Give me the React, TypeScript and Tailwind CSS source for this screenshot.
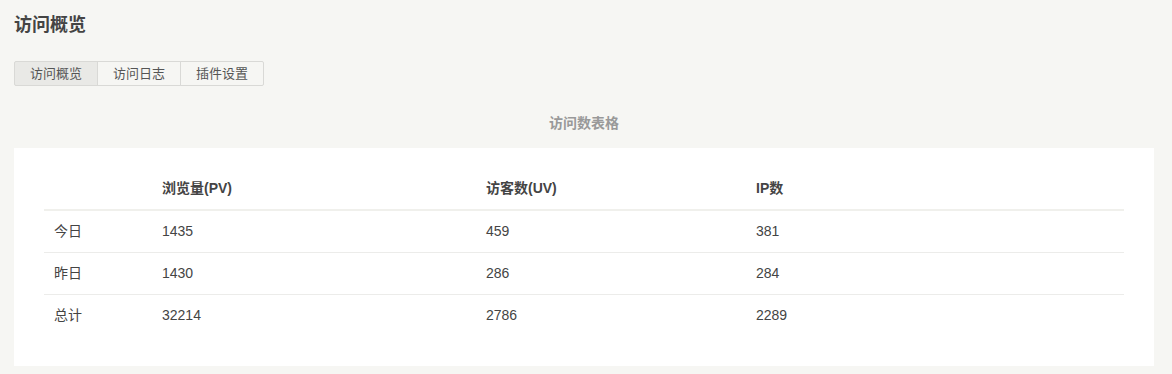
const rows = [
  { label: '今日', pv: 1435, uv: 459, ip: 381 },
  { label: '昨日', pv: 1430, uv: 286, ip: 284 },
  { label: '总计', pv: 32214, uv: 2786, ip: 2289 },
]

const tabs = ['访问概览', '访问日志', '插件设置']

export default function App() {
  return (
    <div
      className="min-h-[374px] bg-[#f6f6f3] text-[#444] pl-[14px] pt-[13px]"
      style={{ fontFamily: '"Liberation Sans", Arial, "Noto Sans CJK SC", sans-serif' }}
    >
      <h2 className="text-[18px] leading-[24px] font-bold">访问概览</h2>

      {/* tabs */}
      <ul className="mt-[24px] flex">
        {tabs.map((t, i) => (
          <li
            key={t}
            className={`w-[84px] h-[25px] border border-[#d9d9d6] text-center text-[13px] leading-[23px] text-[#555] ${
              i > 0 ? '-ml-px' : ''
            } ${i === 0 ? 'bg-[#e9e9e6] rounded-l-[2px]' : 'bg-[#f6f6f3]'} ${i === 2 ? 'rounded-r-[2px]' : ''}`}
          >
            {t}
          </li>
        ))}
      </ul>

      <div className="w-[1140px]">
        <h3 className="mt-[27px] text-center text-[14px] leading-[20px] font-bold text-[#999]">访问数表格</h3>

        <div className="mt-[15px] bg-white px-[30px] pt-[20px] pb-[30px]">
          <table className="w-full table-fixed border-separate border-spacing-0 text-[14px]">
            <colgroup>
              <col className="w-[108px]" />
              <col className="w-[324px]" />
              <col className="w-[270px]" />
              <col />
            </colgroup>
            <thead>
              <tr>
                {['', '浏览量(PV)', '访客数(UV)', 'IP数'].map((h, i) => (
                  <th key={i} className="px-[10px] py-[10px] leading-[21px] text-left font-bold border-b-2 border-[#f0f0ec]">
                    {h}
                  </th>
                ))}
              </tr>
            </thead>
            <tbody>
              {rows.map((r, i) => {
                const b = i < rows.length - 1 ? 'border-b border-[#ececea]' : ''
                return (
                  <tr key={r.label}>
                    <td className={`px-[10px] py-[10px] leading-[21px] ${b}`}>{r.label}</td>
                    <td className={`px-[10px] py-[10px] leading-[21px] ${b}`}>{r.pv}</td>
                    <td className={`px-[10px] py-[10px] leading-[21px] ${b}`}>{r.uv}</td>
                    <td className={`px-[10px] py-[10px] leading-[21px] ${b}`}>{r.ip}</td>
                  </tr>
                )
              })}
            </tbody>
          </table>
        </div>
      </div>
    </div>
  )
}
